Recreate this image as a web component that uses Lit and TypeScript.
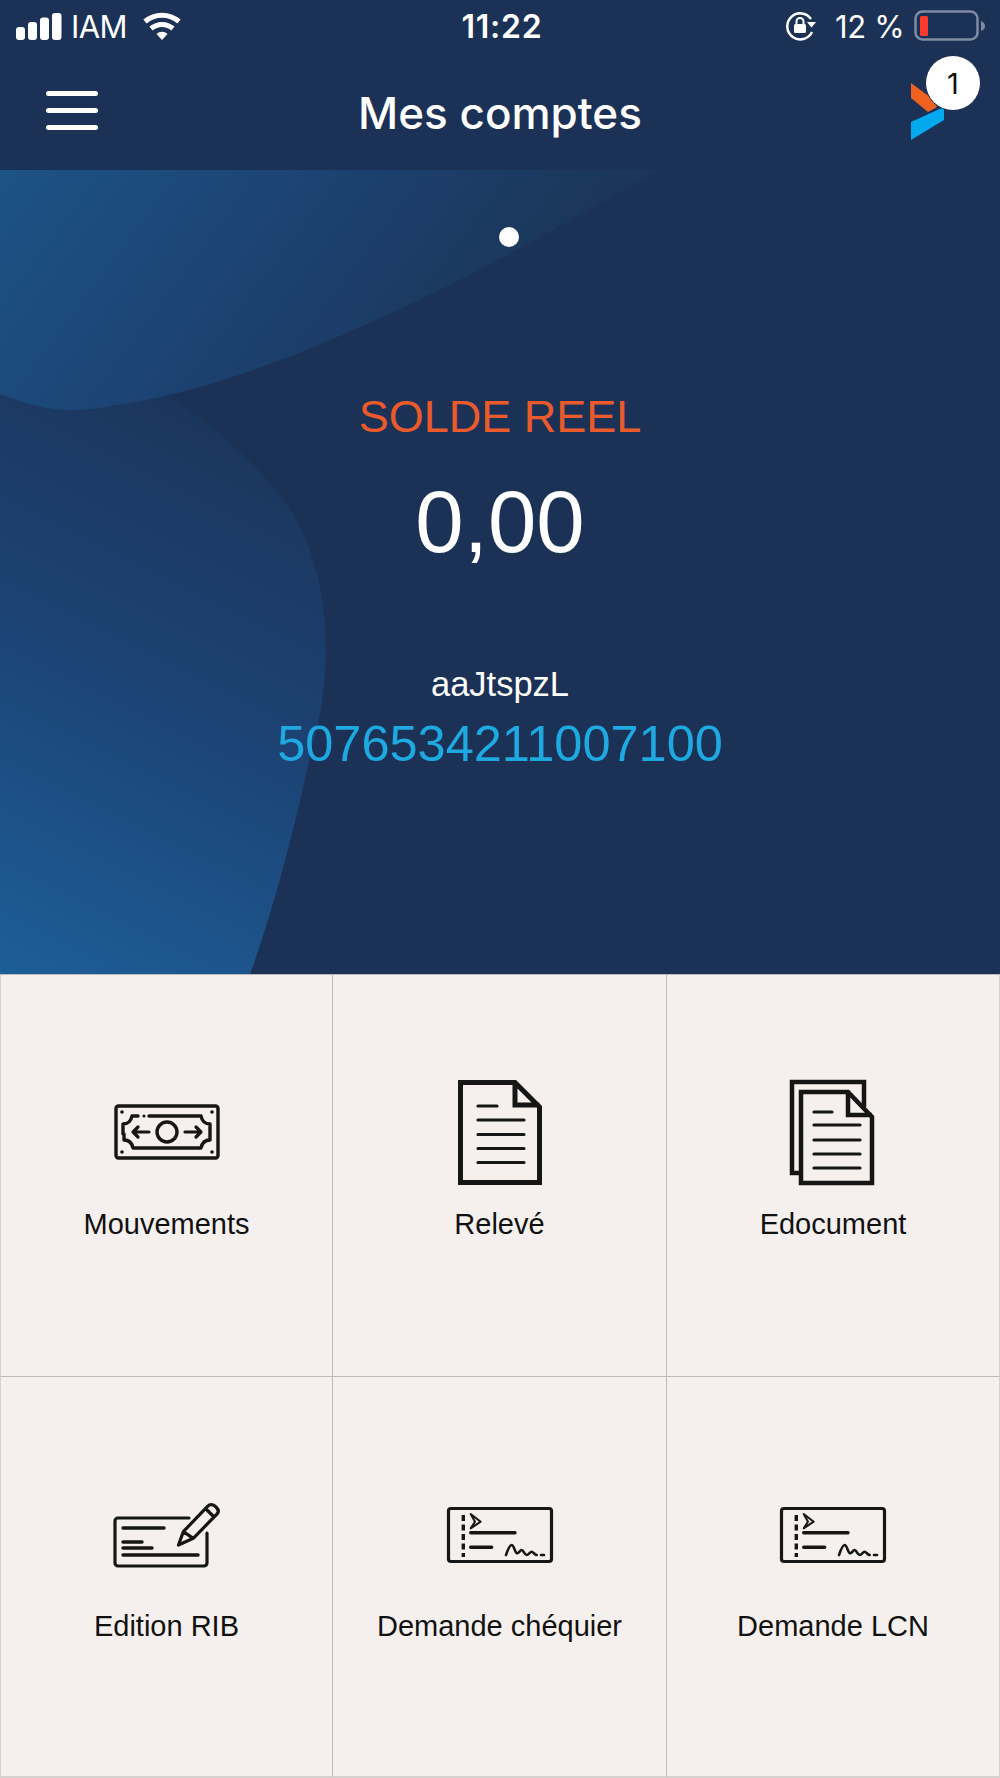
import { LitElement, html, css, svg } from "lit";
import { customElement } from "lit/decorators.js";

const S = (inner: unknown) => html`<svg class="ico" viewBox="0 0 110 110" fill="none" stroke="#161616" stroke-linecap="round" stroke-linejoin="round">${inner}</svg>`;

const cash = S(svg`
  <rect x="4" y="29" width="102" height="52" rx="2.5" stroke-width="3.4"/>
  <path stroke-width="3.4" d="M11 57V47c5 0 8-3 9-8h6M37 39h52c1 5 4 8 9 8v16c-5 0-8 3-9 8H21c-1-5-4-8-9-8v-6"/>
  <circle cx="55" cy="55" r="10" stroke-width="3.4"/>
  <path stroke-width="3.2" d="M37 55H21M26 50l-5 5 5 5M73 55h16M84 50l5 5-5 5"/>
  <circle cx="10" cy="35" r="1.8" fill="#161616" stroke="none"/><circle cx="100" cy="35" r="1.8" fill="#161616" stroke="none"/>
  <circle cx="10" cy="75" r="1.8" fill="#161616" stroke="none"/><circle cx="100" cy="75" r="1.8" fill="#161616" stroke="none"/>
  <circle cx="32" cy="39" r="1.6" fill="#161616" stroke="none"/>
`);

const releve = S(svg`
  <path stroke-width="5" stroke-linecap="butt" stroke-linejoin="miter" d="M15.500 5.500H70L94.500 30V105.500H15.500ZM70 5.500V28H94.500"/>
  <path stroke-width="3.200" d="M33 29h19M33 43h46M33 57.500h46M33 71.500h46M33 85.500h46"/>
`);

const edoc = S(svg`
  <path stroke-width="4.500" stroke-linecap="butt" stroke-linejoin="miter" d="M21 96H14V5H86V30"/>
  <path stroke-width="4.500" stroke-linecap="butt" stroke-linejoin="miter" d="M23 15H70L94 40V106H23ZM70 15V38H94"/>
  <path stroke-width="3.200" d="M36 35h18M36 48h46M36 63h46M36 77h46M36 91h46"/>
`);

const rib = S(svg`
  <path stroke-width="3.200" d="M77 39H6a3 3 0 0 0-3 3V84a3 3 0 0 0 3 3H92a3 3 0 0 0 3-3V54"/>
  <path stroke-width="3.400" d="M11 49H52M11 63H30M11 69H40M11 76H86"/>
  <path stroke-width="3.200" d="M66.500 66 71.300 52.700 95.300 27.700C98 25 101 25 104 28 107 31 107 33 105 35L81.300 59.300ZM71.300 52.700 81.300 59.300M95 31 102 38"/>
`);

const cheque = S(svg`
  <rect x="3.500" y="29.500" width="103" height="53" rx="2.500" stroke-width="3.200"/>
  <path stroke-width="3.400" stroke-linecap="butt" stroke-dasharray="6 3.500" d="M18.300 36V78"/>
  <path stroke-width="2" d="M25.700 35 35.700 42.700 25.700 49.300 30 42.700Z"/>
  <path stroke-width="3.400" d="M25.700 53.700H70M25.700 68.300H46.700"/>
  <path stroke-width="2.600" d="M61 76C63 70 65 66 66.700 66 69 66 70 74.300 72.300 74.300 74 74.300 75 71 76.700 71 78.500 71 79.500 76 81.700 76 83.500 76 85 72.700 86.700 72.700 88 72.700 90 76 91.700 76M96 76H99"/>
`);

const ITEMS = [
  { label: "Mouvements", icon: cash },
  { label: "Relevé", icon: releve },
  { label: "Edocument", icon: edoc },
  { label: "Edition RIB", icon: rib },
  { label: "Demande chéquier", icon: cheque },
  { label: "Demande LCN", icon: cheque },
];

@customElement("app-root")
export class AppRoot extends LitElement {
  static styles = css`
    :host { display: block; width: 1000px; height: 1778px; background: #1b3256; overflow: hidden;
      font-family: "Liberation Sans", Arial, sans-serif; }
    .status { height: 50px; position: relative; display: flex; align-items: center; justify-content: space-between;
      padding: 2px 14px 0 16px; box-sizing: border-box; color: #fff; }
    .st-left, .st-right { display: flex; align-items: center; }
    .carrier { font: 400 31px "Inter", sans-serif; margin-left: 9px; width: 72px; letter-spacing: -0.6px; }
    .time { position: absolute; left: 4px; right: 0; top: 9px; text-align: center; font: 600 32px/36px "Inter", sans-serif; letter-spacing: 0.8px; }
    .pct { font: 400 31px "Inter", sans-serif; margin: 0 8px 0 18px; width: 71px; white-space: nowrap; letter-spacing: -0.3px; }
    .header { height: 120px; display: flex; align-items: center; justify-content: space-between; position: relative; padding: 0 0 0 46px; }
    .burger { width: 52px; display: flex; flex-direction: column; gap: 12px; margin-top: 0; }
    .burger i { display: block; height: 5px; background: #fff; border-radius: 3px; }
    .title { position: absolute; left: 0; right: 0; top: 33px; text-align: center; color: #fff; font: 500 44px/60px "Inter", sans-serif; margin: 0; }
    .logo { position: absolute; left: 905px; top: 25px; width: 50px; height: 70px; }
    .badge { position: absolute; left: 925px; top: 5px; width: 56px; height: 56px; border-radius: 50%; background: #fff; border: 1px solid #14264a;
      box-sizing: border-box; color: #111; display: flex; align-items: center; justify-content: center; font: 400 29px "Inter", sans-serif; }
    .hero { height: 804px; position: relative; overflow: hidden; display: flex; flex-direction: column; align-items: center; color: #fff; }
    .waves { position: absolute; inset: 0; width: 1000px; height: 804px; }
    .hero > div { position: relative; }
    .dot { width: 20px; height: 20px; border-radius: 50%; background: #fff; margin: 57px 0 0 18px; }
    .solde { margin-top: 144px; color: #ea5a2a; font-size: 45px; line-height: 52px; }
    .amount { margin-top: 29px; font-size: 87px; line-height: 100px; }
    .name { margin-top: 92px; font-size: 34.500px; line-height: 40px; }
    .num { margin-top: 11px; color: #1fa9e1; font-size: 50.500px; line-height: 58px; }
    .grid { display: grid; grid-template-columns: 333px 334px 333px; grid-template-rows: 402px 402px; background: #f5f0ee; }
    .cell { border-top: 1.500px solid #bdbbb8; border-right: 1.500px solid #bdbbb8; display: flex; flex-direction: column; align-items: center; padding-top: 102px; box-sizing: border-box; }
    .cell:nth-child(3n) { border-right: 1.500px solid #d4d1ce; }
    .cell:nth-child(3n+1) { border-left: 1.500px solid #d4d1ce; }
    .cell:nth-child(n+4) { border-bottom: 2px solid #d4d1ce; }
    .ico { width: 110px; height: 110px; display: block; }
    .label { margin-top: 20px; font-size: 29px; line-height: 34px; color: #111; white-space: nowrap; }
  `;

  render() {
    return html`
      <div class="status">
        <div class="st-left">
          <svg width="46" height="27" viewBox="0 0 46 27" fill="#fff">
            <rect x="0" y="14" width="9" height="13" rx="3"/><rect x="12" y="9" width="9" height="18" rx="3"/>
            <rect x="24" y="4.500" width="9" height="22.500" rx="3"/><rect x="36" y="0" width="9.500" height="27" rx="3"/>
          </svg>
          <span class="carrier">IAM</span>
          <svg width="38" height="28" viewBox="0 0 38 28" fill="none" stroke="#fff" stroke-width="5">
            <path d="M2 9.500C12 1 26 1 36 9.500"/><path d="M8 16.500C14.500 11 23.500 11 30 16.500"/>
            <path d="M13.500 22C17 19 21 19 24.500 22L19 28Z" fill="#fff" stroke="none"/>
          </svg>
        </div>
        <div class="time">11:22</div>
        <div class="st-right">
          <svg width="32" height="30" viewBox="0 0 32 30" fill="none" stroke="#fff" stroke-width="2.500">
            <path d="M26 8A13 13 0 1 0 27 21"/>
            <path d="M22 11h9l-4.500 5.500Z" fill="#fff" stroke="none"/>
            <rect x="9" y="13" width="12" height="9" rx="1.500" fill="#fff" stroke="none"/>
            <path d="M11.500 13V10.500a3.500 3.500 0 0 1 7 0V13" stroke-width="2"/>
          </svg>
          <span class="pct">12 %</span>
          <svg width="72" height="32" viewBox="0 0 72 32" fill="none">
            <rect x="1.500" y="1.500" width="62" height="28" rx="7" stroke="#7f8ba0" stroke-width="2.500"/>
            <rect x="6" y="6" width="8" height="20" rx="1.500" fill="#ff3b30"/>
            <path d="M67 11c3 1 4 3 4 5s-1 4-4 5Z" fill="#7f8ba0"/>
          </svg>
        </div>
      </div>

      <div class="header">
        <div class="burger"><i></i><i></i><i></i></div>
        <h1 class="title">Mes comptes</h1>
        <svg class="logo" viewBox="0 0 50 70">
          <path d="M6 8 25 22 32 32 23 37 6 23Z" fill="#f0611f"/>
          <path d="M39 32V45L6 65V47Z" fill="#03a9ee"/>
        </svg>
        <div class="badge">1</div>
      </div>

      <div class="hero">
        <svg class="waves" viewBox="0 0 1000 804" preserveAspectRatio="none">
          <defs>
            <linearGradient id="g1" gradientUnits="userSpaceOnUse" x1="0" y1="804" x2="300" y2="200">
              <stop offset="0" stop-color="#1d5e98"/><stop offset="0.5" stop-color="#1c4273"/><stop offset="1" stop-color="#1b3256"/>
            </linearGradient>
            <linearGradient id="g2" gradientUnits="userSpaceOnUse" x1="0" y1="0" x2="400" y2="300">
              <stop offset="0" stop-color="#1c5385"/><stop offset="0.5" stop-color="#1c4373"/><stop offset="1" stop-color="#1b3659"/>
            </linearGradient>
          </defs>
          <path d="M0 170C110 180 230 250 290 340 330 400 335 500 312 576 295 660 270 750 250 804H0Z" fill="url(#g1)"/>
          <path d="M0 0H657C480 105 270 215 110 236 70 244 40 240 0 224Z" fill="url(#g2)"/>
        </svg>
        <div class="dot"></div>
        <div class="solde">SOLDE REEL</div>
        <div class="amount">0,00</div>
        <div class="name">aaJtspzL</div>
        <div class="num">5076534211007100</div>
      </div>

      <div class="grid">
        ${ITEMS.map(it => html`<div class="cell">${it.icon}<div class="label">${it.label}</div></div>`)}
      </div>
    `;
  }
}
